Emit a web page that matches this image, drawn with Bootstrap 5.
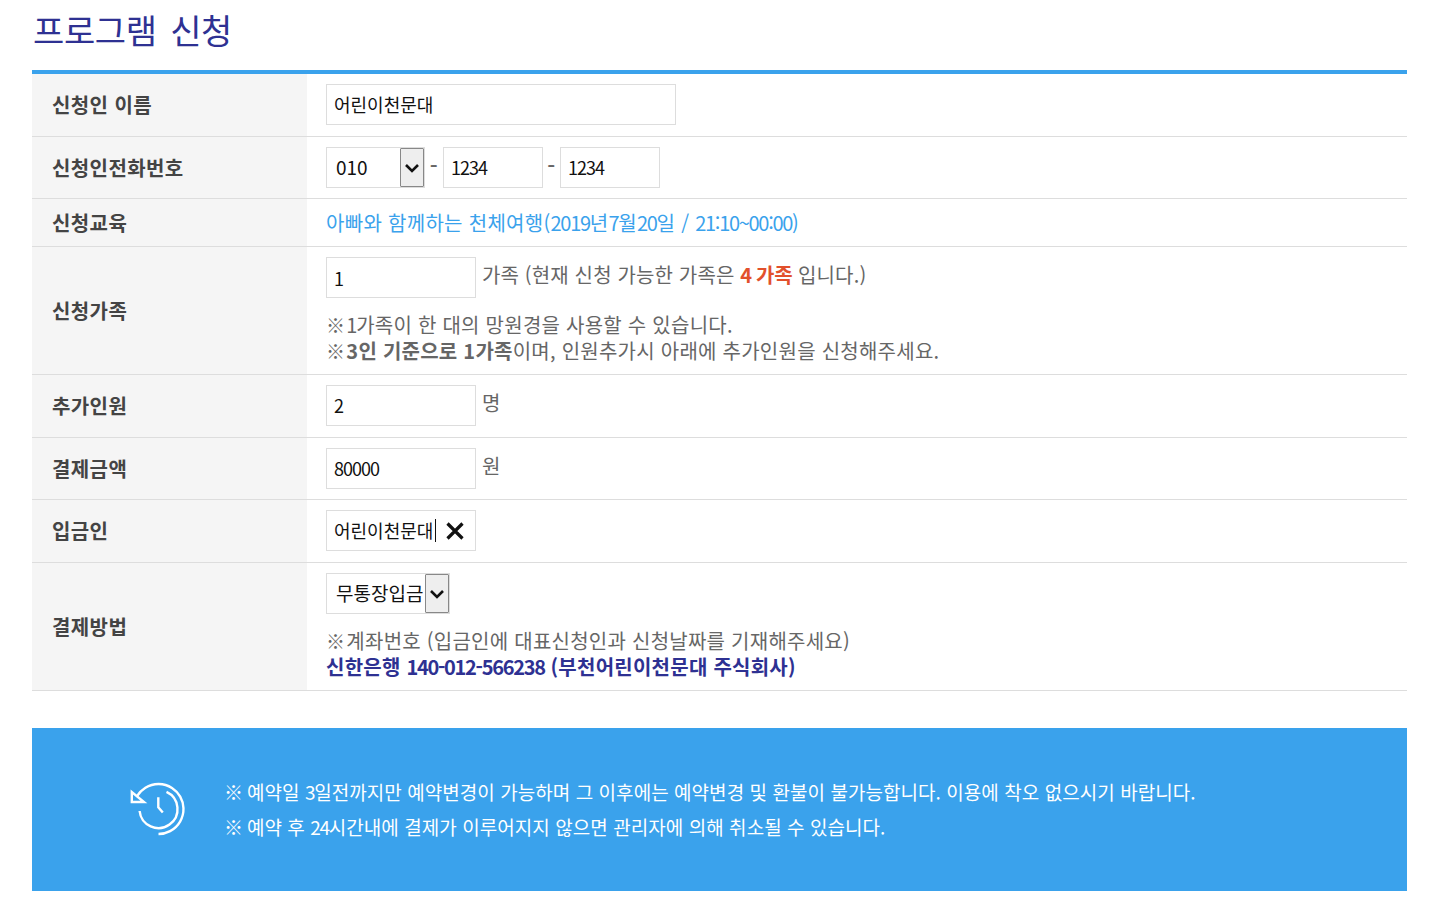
<!DOCTYPE html>
<html lang="ko">
<head>
<meta charset="utf-8">
<title>프로그램 신청</title>
<link href="https://cdn.jsdelivr.net/npm/bootstrap@5.3.0/dist/css/bootstrap.min.css" rel="stylesheet">
<style>
body{font-family:"Noto Sans CJK KR","Noto Sans",sans-serif;font-size:20px;letter-spacing:.3px;color:#666;background:#fff;overflow:hidden}
.pg-wrap{padding:0 44px 0 32px}
.pg-title{font-size:34px;font-weight:400;color:#2e3192;height:70px;margin:0;line-height:60px;padding-left:1px;letter-spacing:-.4px;word-spacing:4.500px}
.pg-form{width:100%;border-top:4px solid #3aa2ec;border-collapse:separate;border-spacing:0;margin:0}
.pg-form th,.pg-form td{border-bottom:1px solid #ddd;vertical-align:middle;padding:0}
.pg-form th{width:275px;background:#f5f5f5;color:#444;font-weight:700;padding-left:20px;line-height:24px;letter-spacing:.4px}
.pg-form td{padding-left:19px;line-height:26px}
.h62{height:63px}.h61{height:62px}.h48{height:48px}.h128{height:128px}
.pg-in{border:1px solid #ddd;height:41px;color:#111;padding:0 7px 0;font:inherit;font-size:18px;letter-spacing:0;border-radius:0;background:#fff;outline:0;vertical-align:top}
.pg-digits{letter-spacing:-1px;padding-bottom:1px}
.pg-line{display:block;height:41px;margin-bottom:2px}
.pg-line-even{margin-bottom:0}
.pg-line-top{margin-bottom:14px}
.w350{width:350px}.w150{width:150px}.w100x{width:100px}
.pg-unit{display:inline-block;vertical-align:top;margin-top:5px;margin-left:6px;letter-spacing:.15px}
.pg-sel{position:relative;display:inline-block;vertical-align:top}
.pg-sel select{appearance:none;border:1px solid #ddd;height:41px;background:#fff;font:inherit;font-size:19px;letter-spacing:0;color:#111;padding:0 0 1px 9px;border-radius:0;outline:0;display:block}
.w100s{width:99px}.w124s{width:124px}
.pg-arrow{position:absolute;top:1px;right:1px;width:24px;height:39px;background:#eee;border:1px solid #888;border-radius:1px;display:flex;align-items:center;justify-content:center;pointer-events:none}
.pg-dash{display:inline-block;width:17px;text-align:center;vertical-align:top;margin-top:4px;font-family:"Liberation Sans",sans-serif;font-size:24px}
.pg-dash-first{width:18px}
.pg-clear{position:relative;display:inline-block;vertical-align:top}
.pg-clear input{display:block}
.pg-x{position:absolute;right:11px;top:11px;pointer-events:none}
.pg-cursor{position:absolute;left:109px;top:9px;width:1px;height:23px;background:#111}
.pg-sky{color:#3aa2ec}
.pg-red{color:#e2502c;font-weight:700;letter-spacing:-.3px;word-spacing:-1px}
.pg-navy{color:#2e3192;font-weight:700}
.pg-note{margin:0;line-height:26px;letter-spacing:.25px}
.pg-n{letter-spacing:-1.3px}
.pg-mk{font-size:19px;word-spacing:-4.500px}
.pg-info{background:#3aa2ec;color:#fff;height:163px;margin-top:37px;padding-left:93px;padding-bottom:2px;gap:29px}
.pg-info p{margin:0;line-height:35px;font-size:19px;letter-spacing:.05px}
.pg-info .pg-mk{word-spacing:-1.500px}
</style>
</head>
<body>
<div class="pg-wrap">
  <h1 class="pg-title">프로그램 신청</h1>
  <table class="pg-form">
    <tr class="h62"><th>신청인 이름</th><td><span class="pg-line"><input class="pg-in w350" value="어린이천문대"></span></td></tr>
    <tr class="h61"><th>신청인전화번호</th><td>
      <span class="pg-line pg-line-even"><span class="pg-sel"><select class="w100s"><option>010</option></select><span class="pg-arrow"><svg width="16" height="10" viewBox="0 0 16 10"><path d="M2 2l6 6 6-6" fill="none" stroke="#111" stroke-width="2.6"/></svg></span></span><span class="pg-dash pg-dash-first">-</span><input class="pg-in pg-digits w100x" value="1234"><span class="pg-dash">-</span><input class="pg-in pg-digits w100x" value="1234"></span>
    </td></tr>
    <tr class="h48"><th>신청교육</th><td class="pg-sky">아빠와 함께하는 천체여행(<span class="pg-n">2019</span>년<span class="pg-n">7</span>월<span class="pg-n">20</span>일 / <span class="pg-n">21:10~00:00)</span></td></tr>
    <tr class="h128"><th>신청가족</th><td>
      <span class="pg-line pg-line-top"><input class="pg-in w150" value="1"><span class="pg-unit">가족 (현재 신청 가능한 가족은 <span class="pg-red">4 가족</span> 입니다.)</span></span>
      <p class="pg-note"><span class="pg-mk">※ </span><span class="pg-n">1</span>가족이 한 대의 망원경을 사용할 수 있습니다.<br><span class="pg-mk">※ </span><b>3인 기준으로 1가족</b>이며, 인원추가시 아래에 추가인원을 신청해주세요.</p>
    </td></tr>
    <tr class="h62"><th>추가인원</th><td><span class="pg-line"><input class="pg-in w150" value="2"><span class="pg-unit">명</span></span></td></tr>
    <tr class="h61"><th>결제금액</th><td><span class="pg-line pg-line-even"><input class="pg-in pg-digits w150" value="80000"><span class="pg-unit">원</span></span></td></tr>
    <tr class="h62"><th>입금인</th><td><span class="pg-line"><span class="pg-clear"><input class="pg-in w150" value="어린이천문대"><span class="pg-cursor"></span><svg class="pg-x" width="20" height="20" viewBox="0 0 20 20"><path d="M2.500 2.500l15 15M17.500 2.500l-15 15" stroke="#111" stroke-width="3.200" fill="none"/></svg></span></span></td></tr>
    <tr class="h128"><th>결제방법</th><td>
      <span class="pg-line pg-line-top"><span class="pg-sel"><select class="w124s"><option>무통장입금</option></select><span class="pg-arrow"><svg width="16" height="10" viewBox="0 0 16 10"><path d="M2 2l6 6 6-6" fill="none" stroke="#111" stroke-width="2.6"/></svg></span></span></span>
      <p class="pg-note"><span class="pg-mk">※ </span>계좌번호 (입금인에 대표신청인과 신청날짜를 기재해주세요)<br><span class="pg-navy">신한은행 <span class="pg-n">140-012-566238</span> (부천어린이천문대 주식회사)</span></p>
    </td></tr>
  </table>
  <div class="pg-info d-flex align-items-center">
    <svg width="70" height="70" viewBox="0 0 70 70" fill="none" stroke="#fff" stroke-width="2.4" class="flex-shrink-0"><path d="M12 22.200A25 25 0 1 1 33.500 60"/><path d="M14.600 37A19 19 0 1 0 41.500 17.800"/><path d="M6.800 18v10H19z"/><path d="M33.300 23.300v10l4.500 5.200"/></svg>
    <div>
      <p><span class="pg-mk">※ </span>예약일 <span class="pg-n">3</span>일전까지만 예약변경이 가능하며 그 이후에는 예약변경 및 환불이 불가능합니다. 이용에 착오 없으시기 바랍니다.</p>
      <p><span class="pg-mk">※ </span>예약 후 <span class="pg-n">24</span>시간내에 결제가 이루어지지 않으면 관리자에 의해 취소될 수 있습니다.</p>
    </div>
  </div>
</div>
</body>
</html>
